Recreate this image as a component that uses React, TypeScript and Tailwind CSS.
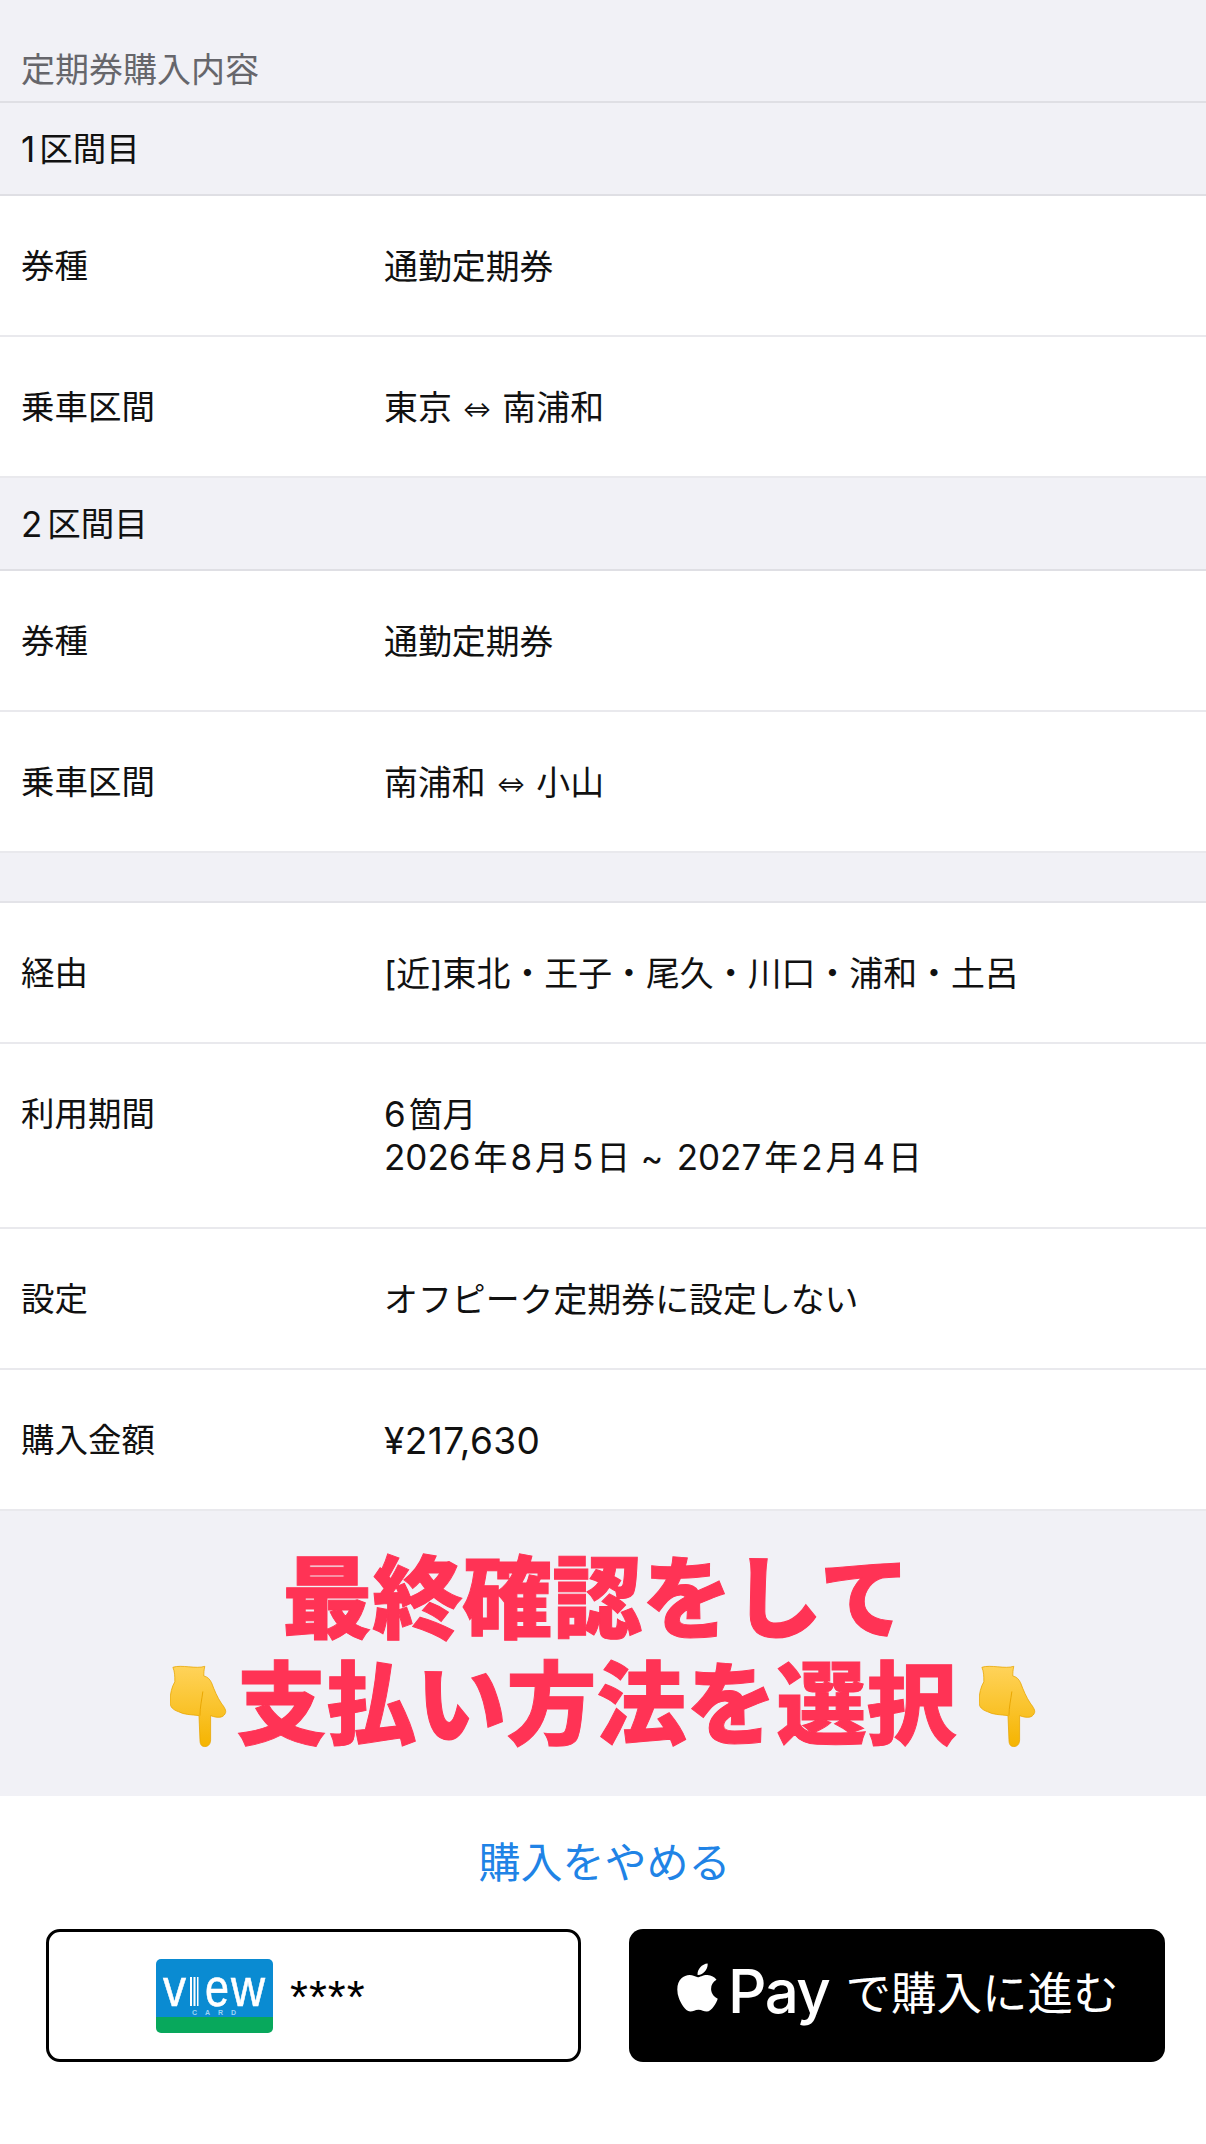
import { FaApple } from "react-icons/fa";

const font = '"Inter","Noto Sans CJK JP","Noto Sans",sans-serif';

function Row({ label, children, tall }: { label: string; children: React.ReactNode; tall?: boolean }) {
  return (
    <div className={`flex bg-white border-b-2 border-[#e9e9ed] px-[21px] pt-[49px] leading-[43px] text-[#111] ${tall ? "h-[185px]" : "h-[141px]"}`}>
      <div className="w-[363px] shrink-0 text-[33.5px]">{label}</div>
      <div className="flex-1 whitespace-nowrap text-[33.9px]">{children}</div>
    </div>
  );
}

function D({ children }: { children: React.ReactNode }) {
  return <span className="text-[35px] mx-[3px]">{children}</span>;
}

function Arrow() {
  return <span className="inline-block text-[22px] leading-[22px] align-[3px] mx-[1px]">⇔</span>;
}

function SectionHead({ children }: { children: React.ReactNode }) {
  return (
    <div className="h-[93px] flex items-center bg-[#f1f1f6] border-b-2 border-[#dfdfe4] pl-[21px] pt-[2px] text-[33.5px] text-[#111] whitespace-pre">
      {children}
    </div>
  );
}

function Hand({ id }: { id: string }) {
  return (
    <svg width="58" height="88" viewBox="0 0 60 88" className="shrink-0">
      <defs>
        <linearGradient id={id} x1="0" y1="0" x2="0" y2="1">
          <stop offset="0" stopColor="#ffd35a" />
          <stop offset="1" stopColor="#f5b400" />
        </linearGradient>
      </defs>
      <path
        d="M3 5 C12 2 27 7 36 4 C35 8 35 11 35 14 C39 15 41 17 43 21 C46 29 49 36 53 42 C56 46 59 50 57 53 C55 57 50 58 42 55 L42 80 C42 84 40 87 36 87 C32 87 31 84 31 80 L30 55 C22 54 14 54 9 51 C3 49 0 46 0 41 C0 32 2 25 5 20 C5 14 5 10 3 5 Z"
        fill={`url(#${id})`}
        stroke="#e8a500"
        strokeWidth="0.8"
      />
      <path d="M31 55 C31 46 33 38 34 30" fill="none" stroke="#e8a500" strokeWidth="1" />
    </svg>
  );
}

function ViewLogo() {
  const f = '"Liberation Sans",sans-serif';
  return (
    <svg width="117" height="74" viewBox="0 0 117 74" className="shrink-0">
      <clipPath id="vc">
        <rect width="117" height="74" rx="5" />
      </clipPath>
      <g clipPath="url(#vc)">
        <rect width="117" height="58" fill="#0a8bd2" />
        <rect y="58" width="117" height="16" fill="#08a85c" />
      </g>
      <g fill="#fff" stroke="#fff" strokeWidth="0.6" fontFamily={f} fontSize="54">
        <text x="7" y="47" textLength="23" lengthAdjust="spacingAndGlyphs">v</text>
        <text x="49" y="47" textLength="24" lengthAdjust="spacingAndGlyphs">e</text>
        <text x="75" y="47" textLength="34" lengthAdjust="spacingAndGlyphs">w</text>
      </g>
      <g fill="#fff">
        <rect x="34" y="18" width="2" height="29" />
        <rect x="37.5" y="18" width="2" height="29" />
        <rect x="41" y="18" width="1.5" height="29" />
      </g>
      <text x="36" y="56" fill="#9fd4f2" fontFamily={f} fontSize="7" fontWeight="700" textLength="44">CARD</text>
    </svg>
  );
}

export default function App() {
  return (
    <div className="w-[1206px] h-[2144px] bg-white overflow-hidden" style={{ fontFamily: font }}>
      <div className="h-[103px] bg-[#f1f1f6] border-b-2 border-[#dfdfe4] flex items-end pl-[21px] pb-[6px] text-[34px] leading-[50px] text-[#66666b]">
        定期券購入内容
      </div>
      <SectionHead><span className="-ml-[3px]"><D>1</D></span><span className="ml-[1px]">区間目</span></SectionHead>
      <Row label="券種">通勤定期券</Row>
      <Row label="乗車区間">東京 <Arrow /> 南浦和</Row>
      <SectionHead><span className="-ml-[3px] mr-[2px]"><D>2</D></span>区間目</SectionHead>
      <Row label="券種">通勤定期券</Row>
      <Row label="乗車区間">南浦和 <Arrow /> 小山</Row>
      <div className="h-[50px] bg-[#f1f1f6] border-b-2 border-[#e3e3e8]" />
      <Row label="経由">[近]東北・王子・尾久・川口・浦和・土呂</Row>
      <Row label="利用期間" tall>
        <span className="-ml-[3px]"><D>6</D></span>箇月
        <br />
        <span className="-ml-[3px]"><D>2026</D></span>年<D>8</D>月<D>5</D>日 <span className="mx-[1px]">~</span> <D>2027</D>年<D>2</D>月<D>4</D>日
      </Row>
      <Row label="設定">オフピーク定期券に設定しない</Row>
      <Row label="購入金額">
        <span className="text-[37px] tracking-[0.4px]">¥217,630</span>
      </Row>
      <div className="h-[285px] bg-[#f1f1f6] flex flex-col items-center pt-[35px] text-[#ff3355] font-black text-[90px] leading-[106px] [-webkit-text-stroke:1px_#ff3355]">
        <div className="pr-[14px]">最終確認をして</div>
        <div className="flex items-center">
          <Hand id="h1" />
          <span className="ml-[9px] mr-[22px]">支払い方法を選択</span>
          <Hand id="h2" />
        </div>
      </div>
      <div className="flex justify-center pl-[3px] pt-[42px] text-[42px] leading-[50px] text-[#2083e6]">購入をやめる</div>
      <div className="flex justify-between pl-[46px] pr-[41px] mt-[41px]">
        <div className="w-[535px] h-[133px] border-[3px] border-black rounded-[14px] flex items-center pl-[107px]">
          <ViewLogo />
          <span className="ml-[17px] mb-[8px] text-[46px] h-[36px] leading-[46px] tracking-[1px] text-black" style={{ fontFamily: '"Liberation Sans",sans-serif' }}>****</span>
        </div>
        <div className="w-[536px] h-[133px] bg-black rounded-[14px] flex items-center pl-[41px] text-white">
          <FaApple className="text-[55px] -mt-[16px]" />
          <span className="text-[60px] font-medium tracking-[-1.5px] leading-none ml-[3px] -mt-[10px]">Pay</span>
          <span className="text-[45.5px] leading-none ml-[16px] -mt-[3px] whitespace-nowrap">で購入に進む</span>
        </div>
      </div>
    </div>
  );
}
